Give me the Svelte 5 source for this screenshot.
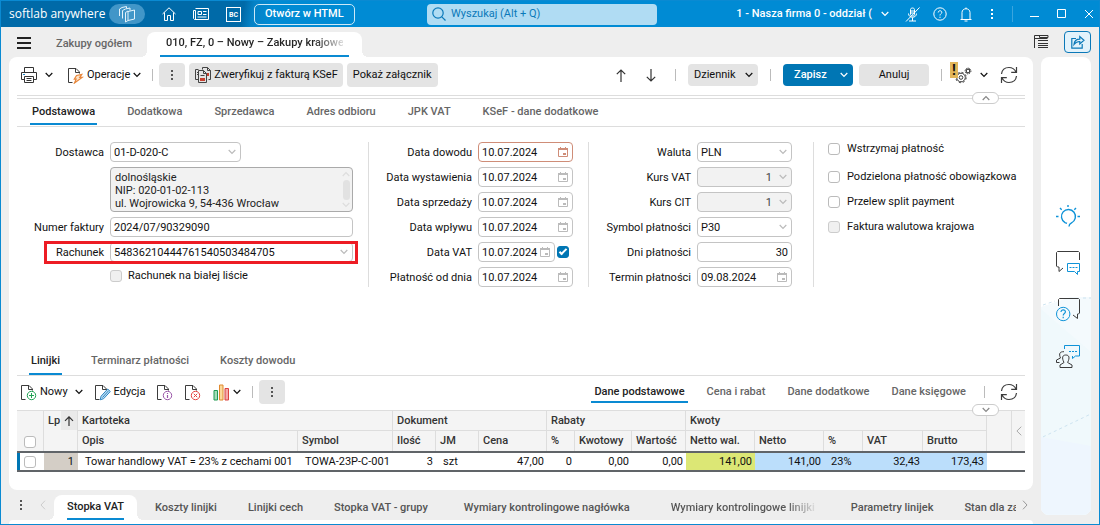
<script>
	const formTabs = ['Podstawowa', 'Dodatkowa', 'Sprzedawca', 'Adres odbioru', 'JPK VAT', 'KSeF - dane dodatkowe'];
	const lineTabs = ['Linijki', 'Terminarz płatności', 'Koszty dowodu'];
	const viewTabs = ['Dane podstawowe', 'Cena i rabat', 'Dane dodatkowe', 'Dane księgowe'];
	const footerTabs = [
		{ name: 'Stopka VAT' },
		{ name: 'Koszty linijki' },
		{ name: 'Linijki cech' },
		{ name: 'Stopka VAT - grupy' },
		{ name: 'Wymiary kontrolingowe nagłówka', wide: true },
		{ name: 'Wymiary kontrolingowe linijki', wide: true, fade: true },
		{ name: 'Parametry linijek' },
		{ name: 'Stan dla za' }
	];

	let formTab = $state('Podstawowa');
	let lineTab = $state('Linijki');
	let viewTab = $state('Dane podstawowe');
	let footerTab = $state('Stopka VAT');

	let dates = $state([
		{ id: 'dowodu', label: 'Data dowodu', value: '10.07.2024', required: true },
		{ id: 'wystawienia', label: 'Data wystawienia', value: '10.07.2024' },
		{ id: 'sprzedazy', label: 'Data sprzedaży', value: '10.07.2024' },
		{ id: 'wplywu', label: 'Data wpływu', value: '10.07.2024' },
		{ id: 'vat', label: 'Data VAT', value: '10.07.2024', check: true },
		{ id: 'platnosc', label: 'Płatność od dnia', value: '10.07.2024' }
	]);

	let dateVat = $state(true);
	let invoiceNumber = $state('2024/07/90329090');
	let days = $state('30');
	let dueDate = $state('09.08.2024');
	const address = 'dolnośląskie\nNIP: 020-01-02-113\nul. Wojrowicka 9, 54-436 Wrocław';

	const columnWidths = [27, 34, 220, 95, 43, 43, 68, 28, 57, 54, 69, 69, 39, 60, 64, 25, 13];
	const columns = [
		'Opis', 'Symbol', 'Ilość', 'JM', 'Cena', '%', 'Kwotowy', 'Wartość',
		'Netto wal.', 'Netto', '%', 'VAT', 'Brutto'
	];
	const cells = [
		{ text: 'Towar handlowy VAT = 23% z cechami 001' },
		{ text: 'TOWA-23P-C-001' },
		{ text: '3', kind: 'num' },
		{ text: 'szt' },
		{ text: '47,00', kind: 'num' },
		{ text: '0', kind: 'num' },
		{ text: '0,00', kind: 'num' },
		{ text: '0,00', kind: 'num' },
		{ text: '141,00', kind: 'num lime' },
		{ text: '141,00', kind: 'num sky' },
		{ text: '23%', kind: 'percent sky' },
		{ text: '32,43', kind: 'num sky' },
		{ text: '173,43', kind: 'num sky' }
	];
</script>

{#snippet chevron()}
	<svg class="chev" width="8" height="6" viewBox="0 0 8 6"><path d="M.7 1 4 4.500 7.300 1" /></svg>
{/snippet}

{#snippet dots()}
	<svg width="4" height="14" viewBox="0 0 4 14" fill="currentColor">
		<rect x="1" y="2" width="2" height="2" /><rect x="1" y="6" width="2" height="2" /><rect x="1" y="10" width="2" height="2" />
	</svg>
{/snippet}

{#snippet calendar()}
	<svg class="calendar" width="10" height="10" viewBox="0 0 10 10">
		<path d="M.5 2.500h9v7h-9zM2.500 0v2M7.500 0v2" fill="none" stroke="currentColor" />
		<path d="M0 1h10v2H0zM5 6h3v2H5z" fill="currentColor" />
	</svg>
{/snippet}

{#snippet refresh()}
	<svg width="18" height="18" viewBox="0 0 18 18" fill="none" stroke="#3c3c3c" stroke-width="1.200">
		<path d="M1.500 8C2 4 5 1.500 9 1.500c3 0 5.500 1.500 7 4.500M16.500 1v5.300h-5.300M16.500 10c-.5 4-3.500 6.500-7.500 6.500-3 0-5.500-1.500-7-4.500M1.500 17v-5.300h5.300" />
	</svg>
{/snippet}

{#snippet sheet(kind)}
	<svg width="16" height="17" viewBox="0 0 16 17" fill="none">
		<path d="M4.500 15.500h-4v-14h7.500l3.500 3.500v1.500M7.500 1.500V5.500h4" stroke="#3c3c3c" />
		{#if kind === 'new'}
			<circle cx="10.500" cy="11.500" r="4.200" stroke="#1fa353" /><path d="M10.500 9v5M8 11.500h5" stroke="#1fa353" />
		{:else if kind === 'info'}
			<circle cx="10.500" cy="11.500" r="4.200" stroke="#9a56a8" /><path d="M10.500 11v3M10.500 9v1" stroke="#9a56a8" stroke-width="1.200" />
		{:else if kind === 'delete'}
			<circle cx="10.500" cy="11.500" r="4.200" stroke="#e5413f" /><path d="m8.800 9.800 3.400 3.400m0-3.400-3.400 3.400" stroke="#e5413f" />
		{:else if kind === 'edit'}
			<path d="m5.200 15.800.9-3.600L12.700 5l2.600 2.500-6.700 7.200z" fill="#bfe0f4" stroke="#2b83c2" />
			<path d="m7.500 13.500 6-6.700" stroke="#2b83c2" />
		{:else}
			<path d="m8.500 8.500 5.300-1.200-2 3.100h2.400L6.500 16l1.600-3.800H6.300z" fill="#fbe3ca" stroke="#e8863a" stroke-width="1.200" />
		{/if}
	</svg>
{/snippet}

<div class="window">
	<header class="titlebar">
		<div class="title-left">
			<span class="brand">softlab anywhere</span>
			<button class="pill" aria-label="Okna">
				<svg width="18" height="17" viewBox="0 0 18 17" fill="none" stroke="#e4f3fc">
					<path d="M7.500 6.500 10 5v9.500L7.500 16zM10 5.500l6.500-1.500v9L10 14.500" />
					<path d="M4.500 12.500V4.500L7.500 3l4.500-1v2.500M1.500 10V3l2.500-1.500L8.500.5v2" />
				</svg>
			</button>
			<button class="tbtn home" aria-label="Start">
				<svg width="14" height="14" viewBox="0 0 14 14" fill="none" stroke="#fff"><path d="M.5 7 7 .8 13.500 7M2.500 5.500v8h3V8.500h3v5h3v-8" /></svg>
			</button>
			<button class="tbtn news" aria-label="Wiadomości">
				<svg width="16" height="14" viewBox="0 0 16 14" fill="none" stroke="#fff"><path d="M2.500 1.500h13v11H1.500l-1-1V3.500h2v9M5 4.500h3.500v3H5zM10 4.500h3.500M10 7.500h3.500M4.500 10h9" /></svg>
			</button>
			<button class="bc" aria-label="Business Center">BC</button>
			<button class="open-html">Otwórz w HTML</button>
		</div>
		<label class="search">
			<svg width="14" height="14" viewBox="0 0 14 14" fill="none" stroke="#0b79b9" stroke-width="1.200"><circle cx="6" cy="6" r="5.200" /><path d="m9.800 9.800 3.700 3.700" /></svg>
			<input type="text" placeholder="Wyszukaj (Alt + Q)" aria-label="Wyszukaj" />
		</label>
		<div class="title-right">
			<button class="company">1 - Nasza firma 0 - oddział ( {@render chevron()}</button>
			<button class="tbtn" aria-label="Mikrofon">
				<svg width="15" height="15" viewBox="0 0 15 15" fill="none" stroke="#fff"><path d="M5.500 2.500c0-2 4-2 4 0v5c0 2-4 2-4 0zM3.500 6.500c0 5 8 5 8 0M7.500 10.500v3.500M4 14h7M1 14.500 14.500.5M6 4h3M6 6h3" /></svg>
			</button>
			<button class="tbtn" aria-label="Pomoc">
				<svg width="14" height="14" viewBox="0 0 14 14" fill="none" stroke="#fff"><circle cx="7" cy="7" r="6.200" /><path d="M5.200 5.500c0-2.400 3.800-2.300 3.600 0C8.700 6.800 7 6.700 7 8.500M7 9.700v1.200" /></svg>
			</button>
			<button class="tbtn" aria-label="Powiadomienia">
				<svg width="12" height="15" viewBox="0 0 12 15" fill="none" stroke="#fff"><path d="M.5 12.500h11M2 12V5.500c0-5 8-5 8 0V12M6 .5V2M4.500 14h3" /></svg>
			</button>
			<button class="tbtn options" aria-label="Więcej">{@render dots()}</button>
			<i class="bar"></i>
			<button class="tbtn win" aria-label="Minimalizuj"><svg width="10" height="10" viewBox="0 0 10 10"><path d="M0 7.500h9" stroke="#fff" /></svg></button>
			<button class="tbtn win" aria-label="Maksymalizuj"><svg width="10" height="10" viewBox="0 0 10 10"><path d="M.5.5h8v8h-8z" fill="none" stroke="#fff" /></svg></button>
			<button class="tbtn win" aria-label="Zamknij"><svg width="10" height="10" viewBox="0 0 10 10"><path d="m1 1 8 8m0-8-8 8" stroke="#fff" /></svg></button>
		</div>
	</header>

	<nav class="doc-tabs">
		<button class="plain menu" aria-label="Menu"><i></i><i></i><i></i></button>
		<button class="doc-tab">Zakupy ogółem</button>
		<button class="doc-tab current"><span><b>010, FZ, 0 – Nowy – Zakupy krajowe</b></span></button>
		<button class="plain list" aria-label="Lista">
			<svg width="15" height="14" viewBox="0 0 15 14" fill="none" stroke="#333"><path d="M.5 13V.500h5v2h8.500v-2h-9M.5 3.500h13M4 5.500h10M4 8.500h10M4 10.500h10M4 12.500h10" /></svg>
		</button>
		<button class="share" aria-label="Udostępnij">
			<svg width="14" height="14" viewBox="0 0 14 14" fill="none" stroke="#0a78b8" stroke-width="1.200"><path d="M5 3.500H.8v9.700h10.400V9M3 9.500c.3-3.500 2.500-5.300 5.800-5.300V1.500L13 5.300 8.800 9V6.500C6 6.500 4.500 7.500 3 9.500z" /></svg>
		</button>
	</nav>

	<div class="workspace">
		<div class="left">
			<main class="panel">
				<div class="toolbar">
					<button class="plain" aria-label="Drukuj">
						<svg width="16" height="16" viewBox="0 0 16 16" fill="none" stroke="#333"><path d="M3.500 5V.500h9V5M3.500 12.500h-3v-7h15v7h-3M3.500 9.500h9v6h-9zM5.500 11.500h5M5.500 13.500h5" /><path d="M2 7.500h2" stroke="#1a88c9" /></svg>
						<span class="chev-gap">{@render chevron()}</span>
					</button>
					<button class="plain operations">{@render sheet('run')} Operacje {@render chevron()}</button>
					<i class="bar"></i>
					<button class="grey square" aria-label="Więcej">{@render dots()}</button>
					<button class="grey ksef">
						<svg width="16" height="16" viewBox="0 0 16 16" fill="none" stroke="#444"><path d="M3.500 12.500h-3V2.500h3M7.500 2.500V.500h5l3 3v9h-2M12.500.500v3h3M2 5.500h1.500M2 7.500h1.500M3.500 3.500v12h8v-9l-3-3zM8.500 3.500v3h3M5.500 8.500h4" /><path d="M5 11h5v3H5zM12 6h2v3h-2z" fill="#c8402f" stroke="none" /></svg>
						Zweryfikuj z fakturą KSeF
					</button>
					<button class="grey">Pokaż załącznik</button>
					<button class="plain arrow push" aria-label="Poprzedni"><svg width="10" height="13" viewBox="0 0 10 13"><path d="M5 13V1M.8 5.200 5 1l4.200 4.200" /></svg></button>
					<button class="plain arrow down" aria-label="Następny"><svg width="10" height="13" viewBox="0 0 10 13"><path d="M5 0v12M.8 7.800 5 12l4.200-4.200" /></svg></button>
					<i class="bar"></i>
					<button class="grey action split">Dziennik {@render chevron()}</button>
					<i class="bar wide"></i>
					<button class="blue action split">Zapisz {@render chevron()}</button>
					<button class="grey action">Anuluj</button>
					<i class="bar wide"></i>
					<button class="plain gear" aria-label="Ustawienia">
						<span class="alert">!</span>
						<svg width="18" height="17" viewBox="0 0 18 17" fill="none" stroke="#3c3c3c">
							<circle cx="7" cy="10.500" r="4.300" /><circle cx="7" cy="10.500" r="1.800" />
							<circle cx="7" cy="10.500" r="5.200" stroke-dasharray="2 2.080" /><circle cx="14" cy="4" r="1.800" stroke-width="1.200" /><circle cx="14" cy="4" r="2.900" stroke-dasharray="1.300 .980" />
						</svg>
						<span class="chev-gap">{@render chevron()}</span>
					</button>
					<button class="plain" aria-label="Odśwież">{@render refresh()}</button>
				</div>

				<div class="rule"><button class="collapse up" aria-label="Zwiń">{@render chevron()}</button></div>

				<nav class="tabs">
					{#each formTabs as tab}
						<button class:selected={formTab === tab} onclick={() => (formTab = tab)}>{tab}</button>
					{/each}
				</nav>

				<form class="form">
					<div class="group supplier">
						<div class="field">
							<label for="dostawca">Dostawca</label>
							<span class="control short"><select id="dostawca"><option>01-D-020-C</option></select>{@render chevron()}</span>
						</div>
						<div class="field">
							<label for="adres"></label>
							<span class="control area">
								<textarea id="adres" aria-label="Adres dostawcy" readonly value={address}></textarea>
								<i class="scroll">{@render chevron()}<i></i>{@render chevron()}</i>
							</span>
						</div>
						<div class="field">
							<label for="numer">Numer faktury</label>
							<span class="control"><input id="numer" type="text" bind:value={invoiceNumber} /></span>
						</div>
						<div class="field marked">
							<label for="rachunek">Rachunek</label>
							<span class="control"><select id="rachunek"><option>54836210444761540503484705</option></select>{@render chevron()}</span>
						</div>
						<div class="field under">
							<span></span>
							<label class="tick"><input type="checkbox" disabled /> Rachunek na białej liście</label>
						</div>
					</div>

					<div class="group dates">
						{#each dates as date (date.id)}
							<div class="field">
								<label for={date.id}>{date.label}</label>
								<span class="control" class:required={date.required}><input id={date.id} type="text" bind:value={date.value} />{@render calendar()}</span>
								{#if date.check}
									<input type="checkbox" aria-label="Data VAT" bind:checked={dateVat} />
								{/if}
							</div>
						{/each}
					</div>

					<div class="group payment">
						<div class="field">
							<label for="waluta">Waluta</label>
							<span class="control"><select id="waluta"><option>PLN</option></select>{@render chevron()}</span>
						</div>
						<div class="field">
							<label for="kurs-vat">Kurs VAT</label>
							<span class="control off"><select id="kurs-vat" disabled><option>1</option></select>{@render chevron()}</span>
						</div>
						<div class="field">
							<label for="kurs-cit">Kurs CIT</label>
							<span class="control off"><select id="kurs-cit" disabled><option>1</option></select>{@render chevron()}</span>
						</div>
						<div class="field">
							<label for="symbol">Symbol płatności</label>
							<span class="control"><select id="symbol"><option>P30</option></select>{@render chevron()}</span>
						</div>
						<div class="field">
							<label for="dni">Dni płatności</label>
							<span class="control right"><input id="dni" type="text" bind:value={days} /></span>
						</div>
						<div class="field">
							<label for="termin">Termin płatności</label>
							<span class="control"><input id="termin" type="text" bind:value={dueDate} />{@render calendar()}</span>
						</div>
					</div>

					<div class="group flags">
						<label class="tick hold"><input type="checkbox" /> Wstrzymaj płatność</label>
						<label class="tick"><input type="checkbox" /> Podzielona płatność obowiązkowa</label>
						<label class="tick"><input type="checkbox" /> Przelew split payment</label>
						<label class="tick"><input type="checkbox" disabled /> Faktura walutowa krajowa</label>
					</div>
				</form>

				<nav class="tabs lines">
					{#each lineTabs as tab}
						<button class:selected={lineTab === tab} onclick={() => (lineTab = tab)}>{tab}</button>
					{/each}
				</nav>

				<div class="toolbar grid-tools">
					<button class="plain new">{@render sheet('new')} Nowy {@render chevron()}</button>
					<button class="plain edit">{@render sheet('edit')} Edycja</button>
					<button class="plain" aria-label="Informacje">{@render sheet('info')}</button>
					<button class="plain" aria-label="Usuń">{@render sheet('delete')}</button>
					<button class="plain chart" aria-label="Wykres">
						<svg width="17" height="17" viewBox="0 0 17 17"><path d="M1 6.500h3.500v9.500H1z" fill="#a5dcb9" stroke="#219a52" /><path d="M6.500 1H10v15H6.500z" fill="#fbd99b" stroke="#e08a2e" /><path d="M12 4.500h3.500V16H12z" fill="#f5a9a9" stroke="#d9413f" /></svg>
						{@render chevron()}
					</button>
					<i class="bar"></i>
					<button class="grey square" aria-label="Więcej">{@render dots()}</button>
					<nav class="view-tabs push">
						{#each viewTabs as tab}
							<button class:selected={viewTab === tab} onclick={() => (viewTab = tab)}>{tab}</button>
						{/each}
					</nav>
					<i class="bar far"></i>
					<button class="plain" aria-label="Odśwież linijki">{@render refresh()}</button>
					<button class="collapse" aria-label="Rozwiń">{@render chevron()}</button>
				</div>

				<table>
					<colgroup>
						{#each columnWidths as width}
							<col style="width: {width}px" />
						{/each}
					</colgroup>
					<thead>
						<tr>
							<th rowspan="2" class="check-head"><input type="checkbox" aria-label="Zaznacz wszystko" /></th>
							<th rowspan="2" class="lp">
								<div>Lp <span><svg width="10" height="10" viewBox="0 0 10 10"><path d="M5 10V1M1 4.800l4-4 4 4" fill="none" stroke="#333" stroke-width="1.200" /></svg></span></div>
							</th>
							<th colspan="2">Kartoteka</th>
							<th colspan="3">Dokument</th>
							<th colspan="3">Rabaty</th>
							<th colspan="5">Kwoty</th>
							<th rowspan="2"></th>
							<th rowspan="2" class="more"><svg width="6" height="10" viewBox="0 0 6 10"><path d="M5.300.7.9 5l4.400 4.300" fill="none" stroke="#aaa" /></svg></th>
						</tr>
						<tr>
							{#each columns as column}
								<th>{column}</th>
							{/each}
						</tr>
					</thead>
					<tbody>
						<tr>
							<td class="check-cell"><input type="checkbox" aria-label="Zaznacz linijkę 1" /></td>
							<td class="num index">1</td>
							{#each cells as cell}
								<td class={cell.kind}>{cell.text}</td>
							{/each}
							<td colspan="2"></td>
						</tr>
					</tbody>
				</table>
			</main>

			<nav class="footer-tabs">
				<button class="plain" aria-label="Więcej zakładek">{@render dots()}</button>
				<button class="plain prev" aria-label="Poprzednie"><svg width="6" height="10" viewBox="0 0 6 10"><path d="M5 .7 1 5l4 4.300" fill="none" stroke="#ccc" /></svg></button>
				<div class="strip">
					{#each footerTabs as tab}
						<button class:selected={footerTab === tab.name} class:wide={tab.wide} onclick={() => (footerTab = tab.name)}>
							<span class:fade={tab.fade}>{tab.name}</span>
						</button>
					{/each}
				</div>
				<button class="plain next" aria-label="Następne"><svg width="6" height="10" viewBox="0 0 6 10"><path d="m1 .7 4 4.300-4 4.300" fill="none" stroke="#999" /></svg></button>
			</nav>
			<div class="next-panel"></div>
		</div>

		<aside class="side">
			<svg class="waves" viewBox="0 0 50 220" preserveAspectRatio="none">
				<path d="M0 12 30 2H50v218H0z" fill="#f4fafd" /><path d="M0 14 50 57v163H0z" fill="#f0f9fc" /><path d="M0 142 50 151v69H0z" fill="#eef6fe" />
				<path d="M2 142 50 119M2 10l12-4M42 3h8" stroke="#cde3f0" stroke-dasharray="3 3" fill="none" />
			</svg>
			<button class="plain" aria-label="Wskazówki">
				<svg width="24" height="24" viewBox="0 0 24 24" fill="none" stroke="#0f93d8" stroke-width="1.400"><path d="M13 22.500c0-2 .5-2.700 2.500-3.700a7 7 0 1 0-6.500-.2l2 .8M12 1v2M4 4l1.700 1.700M20 4l-1.700 1.700M0 12.500h2.500M21.500 12.500H24" /></svg>
			</button>
			<button class="plain" aria-label="Czat">
				<svg width="24" height="24" viewBox="0 0 24 24" fill="none"><path d="M23.500 9V1.500l-1-1H1.500l-1 1V15l1 1h1.500v4.500L7 17" stroke="#3c3c3c" /><path d="M11.500 12.500h12v8h-2v3l-3-3h-7z" stroke="#0f93d8" /><path d="M13.500 16.500h8" stroke="#0f93d8" stroke-dasharray="2 1" /></svg>
			</button>
			<button class="plain" aria-label="Pytania">
				<svg width="24" height="24" viewBox="0 0 24 24" fill="none"><path d="M2.500 8V1.500l1-1h19l1 1V15l-1 1h-1v4.500L17 17" stroke="#3c3c3c" /><circle cx="7.200" cy="16" r="6.700" stroke="#0f93d8" /><path d="M5 14c0-3 4.600-2.800 4.400 0C9.200 15.600 7.200 15.600 7.200 17.500M7.200 18.800v1.500" stroke="#0f93d8" stroke-width="1.200" /></svg>
			</button>
			<button class="plain" aria-label="Społeczność">
				<svg width="24" height="24" viewBox="0 0 24 24" fill="none"><path d="M8.500 4V.500h15v10.500h-4L16.500 13.500v-2.500" stroke="#0f93d8" /><path d="M13 6.500h8" stroke="#0f93d8" stroke-dasharray="2 1" /><path d="M8 17.500c-2.500-5-1.500-7.500 1.800-7.500s4.300 2.500 1.800 7.500l4.400 2.500v2.500H4V20zM3.500 17.500H.5V15L4.500 13C2.500 8.500 4 6.500 8 6.700" stroke="#3c3c3c" /></svg>
			</button>
		</aside>
	</div>
</div>

<style>
	:global(body) {
		margin: 0;
	}

	.window {
		box-sizing: border-box;
		display: flex;
		flex-direction: column;
		min-height: 100vh;
		border: 1px solid #0a8ad2;
		background: #eee;
		font: 11px/14px Roboto, sans-serif;
		color: #222;
		overflow: hidden;
	}

	.window *,
	.window *::before,
	.window *::after {
		box-sizing: border-box;
	}

	svg {
		flex: none;
		display: block;
	}

	button {
		border: 0;
		padding: 0;
		margin: 0;
		background: none;
		font: inherit;
		color: inherit;
		white-space: nowrap;
		cursor: pointer;
	}

	input,
	select,
	textarea {
		margin: 0;
		font: inherit;
		color: inherit;
	}

	.chev path,
	.arrow path {
		fill: none;
		stroke: currentColor;
		stroke-width: 1.2;
	}

	.arrow {
		color: #333;
	}

	/* Title bar */
	.titlebar {
		display: grid;
		grid-template-columns: 426fr 230px 442fr;
		align-items: center;
		height: 26px;
		background: linear-gradient(100deg, #006aa8 0 240px, #0582c6 250px, #008bd4 270px);
		color: #fff;
	}

	.title-left,
	.title-right {
		display: flex;
		align-items: center;
	}

	.title-left {
		padding-left: 8px;
	}

	.brand {
		width: 92px;
		font-family: 'Open Sans', sans-serif;
		font-size: 12px;
		white-space: nowrap;
	}

	.pill {
		display: grid;
		place-items: center;
		width: 36px;
		height: 20px;
		margin-left: 8px;
		border-radius: 10px;
		background: #4196c8;
	}

	.tbtn {
		display: flex;
	}

	.home {
		margin-left: 17px;
	}

	.news {
		margin-left: 17px;
	}

	.bc {
		width: 15px;
		height: 15px;
		margin: 0 13px 0 17px;
		padding-top: 3px;
		border: 1px solid #fff;
		font-size: 7px;
		line-height: 9px;
		font-weight: 700;
	}

	.open-html {
		height: 21px;
		padding: 0 10px;
		border: 1px solid #cce8f7;
		border-radius: 5px;
		font-weight: 500;
	}

	.search {
		display: flex;
		align-items: center;
		gap: 5px;
		height: 21px;
		padding: 0 5px;
		border-radius: 4px;
		background: #b0dcf3;
	}

	.search input {
		flex: 1;
		min-width: 0;
		border: 0;
		padding: 0;
		outline: 0;
		background: none;
	}

	.search input::placeholder {
		color: #0b79b9;
		opacity: 1;
	}

	.title-right {
		justify-content: flex-end;
		gap: 13px;
		padding-right: 5px;
	}

	.title-right .bar {
		height: 16px;
		margin: 0;
		background: #3aa5de;
	}

	.options {
		margin: 0 5px;
	}

	.win {
		margin-left: 4px;
	}

	.company {
		display: flex;
		align-items: center;
		gap: 9px;
		margin-right: 3px;
		font-weight: 500;
	}

	/* Open documents */
	.doc-tabs {
		display: flex;
		align-items: center;
		height: 30px;
		padding: 0 8px;
		font-weight: 500;
		color: #666;
	}

	.menu {
		flex-direction: column;
		gap: 2px;
		padding: 2px 0 0 8px;
	}

	.menu i {
		width: 14px;
		height: 2px;
		margin-bottom: 1px;
		background: #222;
	}

	.doc-tab {
		padding: 3px 15px 0 25px;
	}

	.doc-tab.current {
		position: relative;
		align-self: flex-end;
		width: 215px;
		height: 25px;
		padding: 0 13px;
		border-radius: 8px 8px 0 0;
		background: #fff;
		color: #222;
	}

	.doc-tab.current::before,
	.doc-tab.current::after,
	.strip .selected::before,
	.strip .selected::after {
		content: '';
		position: absolute;
		bottom: 0;
		left: -6px;
		width: 6px;
		height: 6px;
		background: radial-gradient(circle at 0 0, transparent 6px, #fff 6px);
	}

	.doc-tab.current::after,
	.strip .selected::after {
		left: auto;
		right: -6px;
		background: radial-gradient(circle at 100% 0, transparent 6px, #fff 6px);
	}

	.doc-tab.current span {
		display: block;
		height: 25px;
		padding: 4px 6px 0;
		border-bottom: 2px solid #0a8ad2;
		text-align: left;
	}

	.doc-tab b {
		display: block;
		font-weight: 500;
		background: linear-gradient(90deg, #222 148px, #ddd 177px);
		background-clip: text;
		color: transparent;
	}

	.list {
		margin-left: auto;
	}

	.share {
		display: grid;
		place-items: center;
		width: 27px;
		height: 22px;
		margin-left: 15px;
		border: 1px solid #0a78b8;
		border-radius: 4px;
		background: #e2f2fb;
	}

	/* Panels */
	.workspace {
		flex: 1;
		display: grid;
		grid-template-columns: minmax(0, 1fr) 50px;
		gap: 8px;
		padding: 0 8px;
	}

	.left {
		display: flex;
		flex-direction: column;
	}

	.panel {
		flex: 1;
		display: flex;
		flex-direction: column;
		padding: 0 8px 18px;
		border-radius: 8px;
		background: #fff;
	}

	.next-panel {
		height: 4px;
		border-radius: 8px 8px 0 0;
		background: #fff;
	}

	/* Toolbars */
	.toolbar {
		position: relative;
		display: flex;
		align-items: center;
		height: 38px;
		padding: 0 7px 2px 4px;
		color: #111;
	}

	.plain {
		display: flex;
		align-items: center;
	}

	.chev-gap {
		margin-left: 8px;
	}

	.operations {
		gap: 3px;
		margin-left: 15px;
	}

	.bar {
		width: 1px;
		height: 12px;
		margin: 0 6px 0 11px;
		background: #bbb;
	}

	.bar.wide {
		margin: 0 12px;
	}

	.grey,
	.blue {
		display: flex;
		align-items: center;
		justify-content: center;
		height: 24px;
		margin-right: 4px;
		padding: 0 6px;
		border-radius: 4px;
		background: #e4e4e4;
	}

	.square {
		width: 26px;
		color: #555;
	}

	.ksef {
		gap: 3px;
		padding: 0 5px 0 6px;
	}

	.push {
		margin-left: auto;
	}

	.down {
		margin: 0 8px 0 20px;
	}

	.down + .bar {
		margin-right: 12px;
	}

	.action {
		width: 70px;
		height: 22px;
		margin-right: 0;
	}

	.split {
		justify-content: space-between;
		padding-right: 5px;
	}

	.blue {
		margin-right: 6px;
		padding-left: 11px;
		background: #0076b4;
		color: #fff;
		font-weight: 500;
	}

	.gear {
		position: relative;
		margin-right: 12px;
	}

	.alert {
		position: absolute;
		left: -4px;
		top: -5px;
		width: 8px;
		height: 16px;
		background: #e2b65a;
		font-size: 14px;
		line-height: 16px;
		font-weight: 700;
	}

	.rule {
		position: relative;
		height: 4px;
		border: solid #ddd;
		border-width: 1px 0;
	}

	.collapse {
		position: absolute;
		right: 26px;
		top: -4px;
		z-index: 1;
		display: grid;
		place-items: center;
		width: 27px;
		height: 12px;
		border: 1px solid #ccc;
		border-radius: 6px;
		background: #fff;
		color: #888;
	}

	.collapse.up svg {
		transform: rotate(180deg);
	}

	.grid-tools .collapse {
		top: auto;
		bottom: -6px;
	}

	/* Tab rows */
	.tabs {
		display: flex;
		gap: 28px;
		height: 28px;
		padding: 0 13px 1px;
		border-bottom: 1px solid #ddd;
		font-weight: 500;
		color: #666;
	}

	.tabs button,
	.view-tabs button {
		padding: 1px 2px 0;
		border-bottom: 2px solid transparent;
	}

	.tabs .selected,
	.view-tabs .selected {
		border-bottom-color: #0a8ad2;
		color: #222;
	}

	.tabs.lines {
		gap: 27px;
		padding: 0 12px;
	}

	/* Document form */
	.form {
		flex: 1;
		display: grid;
		grid-template-columns: 352fr 220fr 225fr 211fr;
		align-items: start;
		padding: 15px 0 30px;
		color: #111;
	}

	.group {
		display: flex;
		flex-direction: column;
		gap: 5px;
		min-height: 145px;
		border-right: 1px solid #ddd;
		padding-right: 15px;
	}

	.group.payment {
		padding-right: 21px;
	}

	.group.flags {
		gap: 11px;
		padding-left: 14px;
		padding-right: 0;
		border: 0;
	}

	.field {
		display: flex;
		align-items: center;
		gap: 6px;
	}

	.field > :first-child {
		flex: none;
		width: 87px;
		padding-top: 1px;
		text-align: right;
		white-space: nowrap;
	}

	.dates .field > :first-child {
		width: 103px;
	}

	.payment .field > :first-child {
		width: 102px;
	}

	.control {
		position: relative;
		flex: 1;
		display: flex;
		min-width: 0;
		height: 20px;
		border: 1px solid #c4c4c4;
		border-radius: 4px;
		background: #fff;
	}

	.control.short {
		flex: none;
		width: 131px;
	}

	.control.off {
		background: #f2f2f2;
		color: #444;
	}

	.control.required {
		border-color: #cf8d78;
		color: #111;
	}

	.control input,
	.control select,
	.control textarea {
		flex: 1;
		min-width: 0;
		width: 100%;
		padding: 1px 3px 0;
		border: 0;
		outline: 0;
		appearance: none;
		background: none;
		resize: none;
	}

	.control select:disabled {
		color: #444;
		opacity: 1;
	}

	.control > .chev,
	.calendar {
		position: absolute;
		right: 4px;
		top: 6px;
		color: #bbb;
		pointer-events: none;
	}

	.calendar {
		top: 4px;
	}

	.required .calendar {
		color: #cf8d78;
	}

	.control.off select {
		padding-right: 19px;
		text-align-last: right;
	}

	.control.right input {
		text-align: right;
	}

	.control.area {
		height: 45px;
		border-color: #aaa;
		background: #f2f2f2;
		color: #222;
	}

	.control textarea {
		padding: 3px 4px 0;
		line-height: 13px;
		overflow: hidden;
	}

	.scroll {
		display: flex;
		flex-direction: column;
		justify-content: space-between;
		align-items: center;
		width: 12px;
		padding: 3px 2px;
		color: #ddd;
	}

	.scroll i {
		width: 7px;
		height: 20px;
		border-radius: 4px;
		background: #e2e2e2;
	}

	.scroll svg:first-child {
		transform: rotate(180deg);
	}

	.marked {
		position: relative;
	}

	.marked::after {
		content: '';
		position: absolute;
		inset: -1px -5px -2px 27px;
		border: 3px solid #ed1c24;
		pointer-events: none;
	}

	.under {
		padding-top: 2px;
	}

	.tick {
		display: flex;
		align-items: center;
		gap: 6px;
		white-space: nowrap;
	}

	.flags .tick {
		gap: 7px;
	}

	.hold {
		margin-bottom: 3px;
	}

	input[type='checkbox'] {
		flex: none;
		appearance: none;
		width: 12px;
		height: 12px;
		border: 1px solid #bbb;
		border-radius: 3px;
		background: #fff;
	}

	input[type='checkbox']:disabled {
		border-color: #ccc;
		background: #f0f0f0;
	}

	input[type='checkbox']:checked {
		position: relative;
		border-color: #0076b4;
		background: #0076b4;
	}

	input[type='checkbox']:checked::after {
		content: '';
		position: absolute;
		left: 3px;
		top: 0;
		width: 4px;
		height: 8px;
		border: solid #fff;
		border-width: 0 2px 2px 0;
		transform: rotate(45deg);
	}

	.dates .field input[type='checkbox'] {
		margin: 0 4px 0 -4px;
	}

	/* Lines */
	.grid-tools {
		height: 34px;
	}

	.new,
	.edit,
	.chart {
		gap: 3px;
		margin-right: 12px;
	}

	.edit + .plain {
		margin-right: 12px;
	}

	.chart {
		margin: 0 0 0 12px;
	}

	.new svg:last-child {
		margin-left: 4px;
	}

	.view-tabs {
		display: flex;
		gap: 15px;
		font-weight: 500;
		color: #666;
	}

	.view-tabs button {
		height: 22px;
		padding: 2px 3px 0;
	}

	.view-tabs button + button {
		margin-left: 1px;
	}

	.bar.far {
		margin: 0 15px;
	}

	table {
		width: 100%;
		border-collapse: separate;
		border-spacing: 0;
		table-layout: fixed;
	}

	th {
		height: 20px;
		padding: 0 0 0 4px;
		border-right: 1px solid #ddd;
		border-top: 1px solid #ddd;
		background: #f4f4f4;
		text-align: left;
		font-weight: 500;
		white-space: nowrap;
		color: #333;
	}

	thead tr:last-child th {
		height: 21px;
	}

	th:last-child {
		border-right: 0;
	}

	thead tr:last-child th:last-child {
		border-right: 1px solid #ddd;
	}

	.check-head {
		padding: 0 0 3px 7px;
		vertical-align: bottom;
	}

	.lp {
		padding: 0;
		vertical-align: top;
	}

	.lp div {
		display: flex;
		justify-content: space-between;
		align-items: center;
		padding-left: 4px;
	}

	.lp span {
		display: grid;
		place-items: center;
		width: 16px;
		height: 19px;
		background: #eaeaea;
	}

	.more {
		padding: 0 0 0 4px;
	}

	td {
		height: 21px;
		padding: 0 7px;
		border: solid #606468;
		border-width: 2px 0;
		white-space: nowrap;
		color: #111;
	}

	td.num {
		padding: 0 3px 0 0;
		text-align: right;
	}

	td.percent {
		padding: 0 0 0 7px;
	}

	.check-cell {
		padding: 0 0 0 4px;
		box-shadow: inset 3px 0 #0076b4;
	}

	.check-cell input {
		display: block;
		margin-left: 3px;
	}

	.check-head input {
		display: block;
	}

	td.index {
		padding-right: 4px;
		background: #d4cec6;
		background-clip: padding-box;
	}

	td.lime {
		background: #dce775;
		background-clip: padding-box;
	}

	td.sky {
		background: #bbdefb;
		background-clip: padding-box;
	}

	/* Footer tabs */
	.footer-tabs {
		display: flex;
		align-items: center;
		height: 30px;
		padding-left: 10px;
		font-weight: 500;
		color: #555;
	}

	.prev {
		margin: 0 2px 0 17px;
	}

	.strip {
		flex: 1;
		display: flex;
		gap: 5px;
		align-self: flex-end;
		height: 25px;
		min-width: 0;
		padding-left: 6px;
		overflow: hidden;
	}

	.strip button {
		flex: none;
		padding: 0 13px;
	}

	.strip .wide {
		padding: 0 18px;
	}

	.strip .selected {
		position: relative;
		border-radius: 8px 8px 0 0;
		background: #fff;
		color: #222;
	}

	.strip .selected span {
		display: block;
		height: 25px;
		padding-top: 5px;
		border-bottom: 2px solid #0a8ad2;
	}

	.strip .fade {
		background: linear-gradient(90deg, #555 80%, #ddd);
		background-clip: text;
		color: transparent;
	}

	.next {
		margin: 0 5px 0 6px;
	}

	/* Right-hand side */
	.side {
		position: relative;
		display: flex;
		flex-direction: column;
		align-items: center;
		gap: 23px;
		margin-bottom: 9px;
		padding: 147px 0 0 3px;
		border-radius: 8px;
		background: #fff;
		overflow: hidden;
	}

	.side .plain {
		position: relative;
	}

	.waves {
		position: absolute;
		left: 0;
		bottom: 0;
		width: 100%;
		height: 48%;
	}
</style>
